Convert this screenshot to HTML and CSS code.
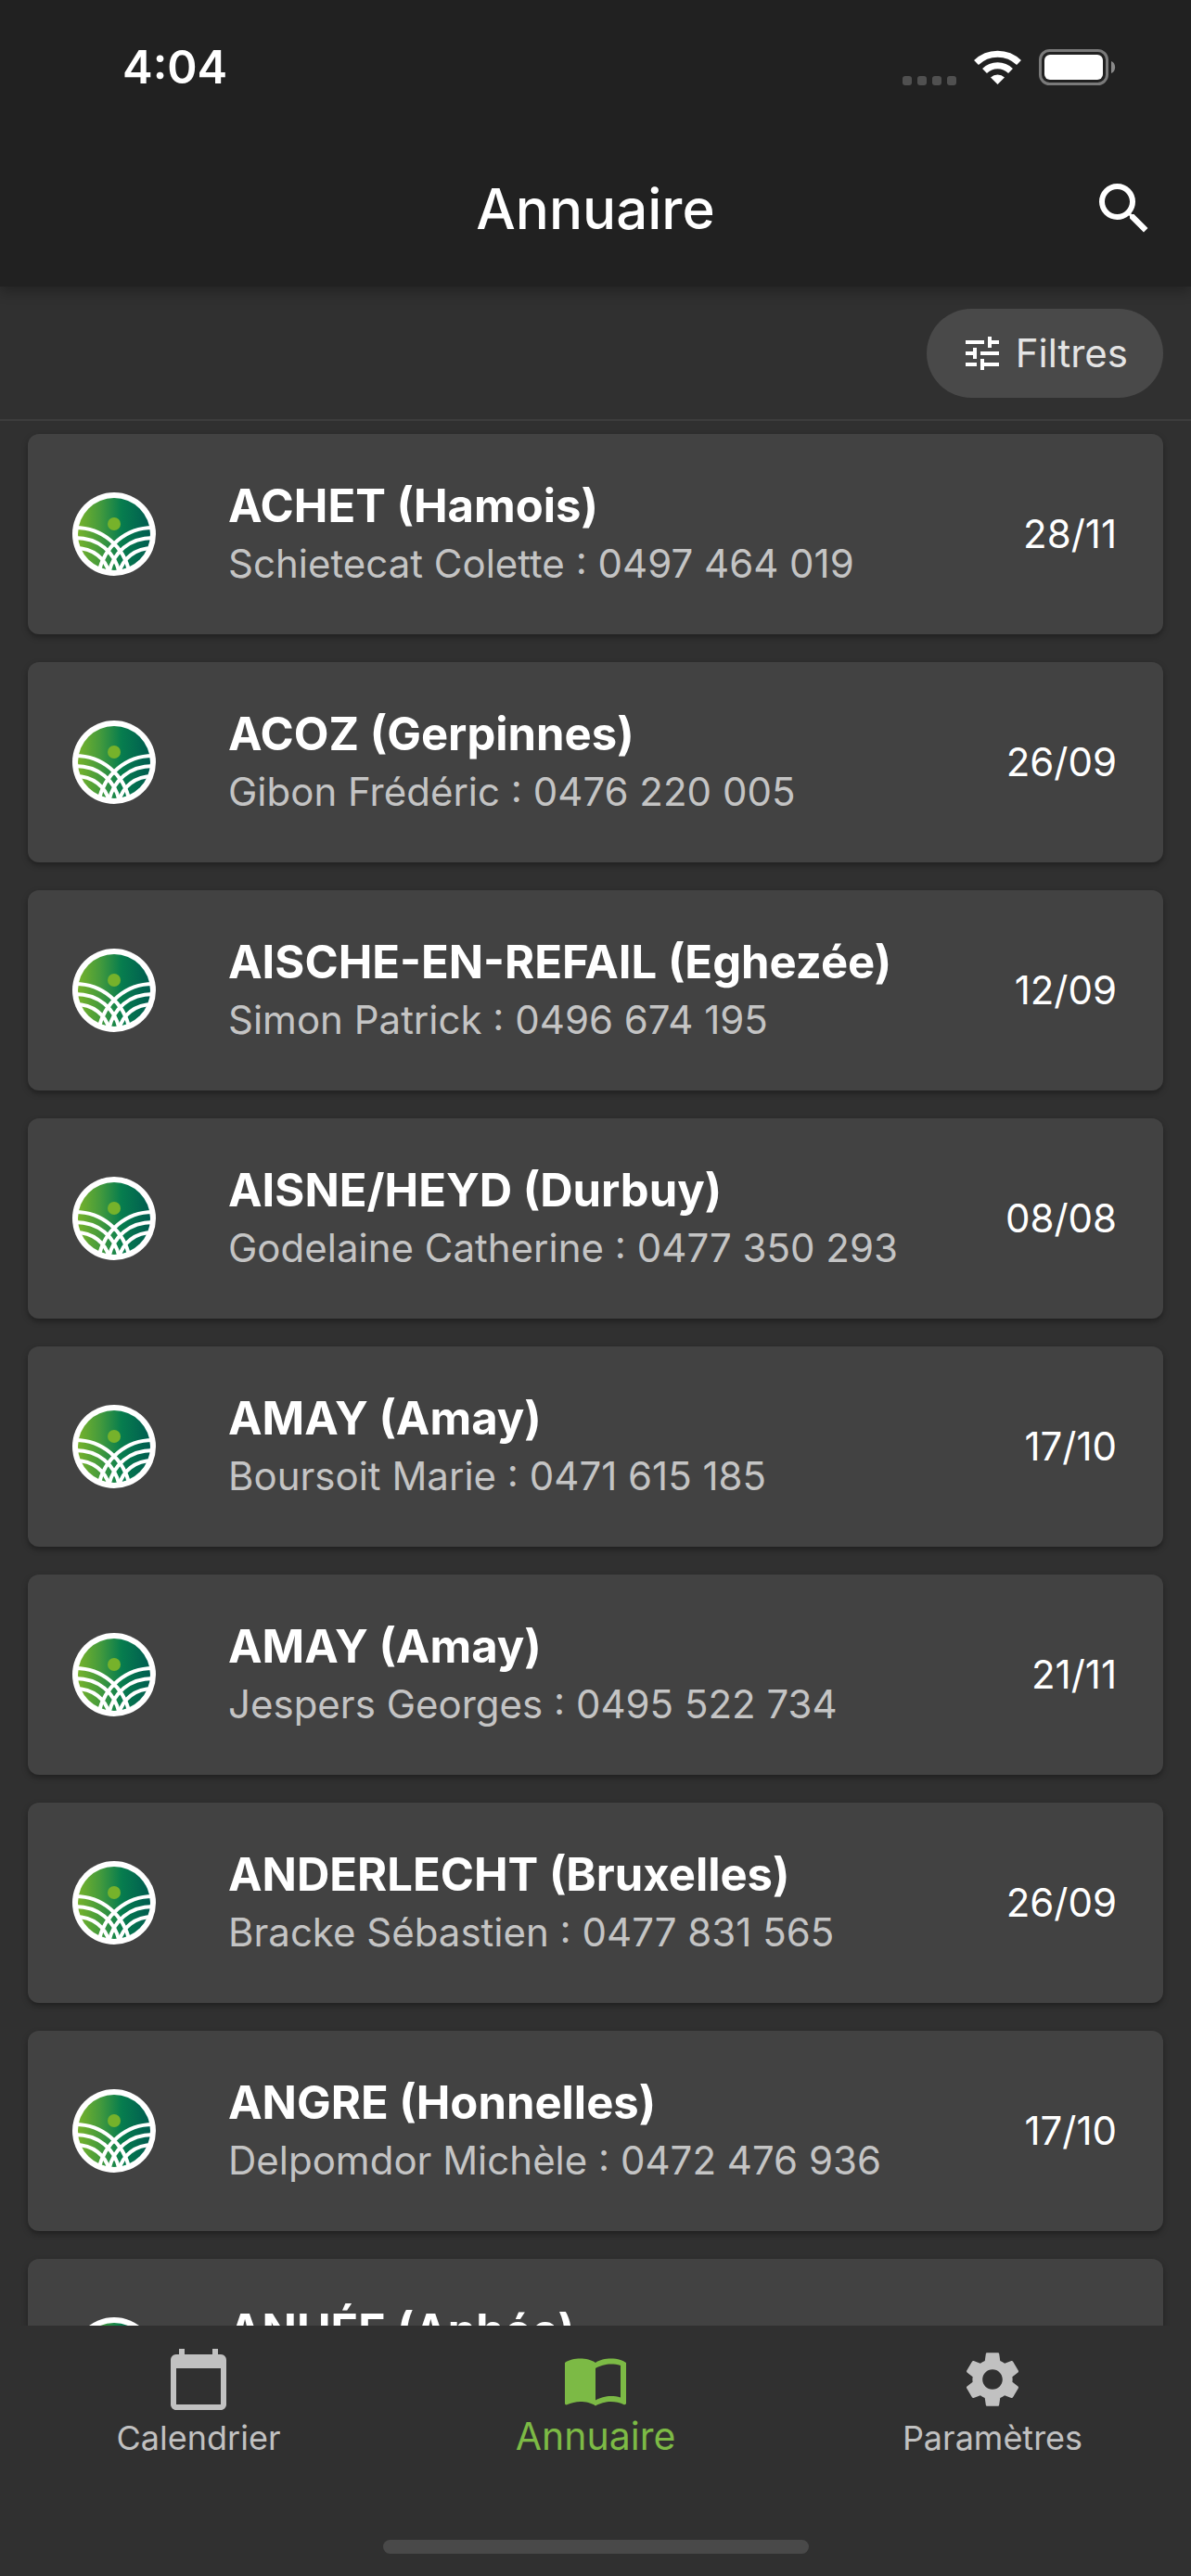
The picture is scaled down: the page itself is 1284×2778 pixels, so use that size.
FILE: index.html
```html
<!DOCTYPE html>
<html lang="fr">
<head>
<meta charset="utf-8">
<meta name="viewport" content="width=device-width, initial-scale=1">
<title>Annuaire</title>
<link rel="stylesheet" href="styles.css">
</head>
<body>
<svg class="sprite" aria-hidden="true">
  <defs>
    <linearGradient id="field" x1="0" x2="1" y1="0" y2="0">
      <stop offset="0" stop-color="#76b22b"/>
      <stop offset="0.3" stop-color="#459b3c"/>
      <stop offset="0.6" stop-color="#077d4e"/>
      <stop offset="1" stop-color="#005c50"/>
    </linearGradient>
    <clipPath id="disc"><circle cx="45" cy="45" r="42"/></clipPath>
  </defs>
  <symbol id="logo" viewBox="0 0 90 90">
    <circle cx="45" cy="45" r="45" fill="#fff"/>
    <circle cx="45" cy="45" r="39" fill="url(#field)"/>
    <circle cx="45" cy="34" r="7" fill="#76b22b"/>
    <g fill="none" stroke="#fff" stroke-width="4" clip-path="url(#disc)">
      <path d="M3 38C32 38 56 58 62 88"/>
      <path d="M3 49C28 49 46 64 51 88"/>
      <path d="M3 60C22 60 36 71 40 88"/>
      <path d="M87 38C58 38 34 58 28 88"/>
      <path d="M87 49C62 49 44 64 39 88"/>
      <path d="M87 60C68 60 54 71 50 88"/>
    </g>
  </symbol>
</svg>
<div class="app">
  <header class="header">
    <div class="status">
      <span class="time">4:04</span>
      <span class="indicators">
        <svg class="cell" viewBox="0 0 58 10" fill="#505050"><rect width="10" height="10" rx="3"/><rect x="16" width="10" height="10" rx="3"/><rect x="32" width="10" height="10" rx="3"/><rect x="48" width="10" height="10" rx="3"/></svg>
        <svg class="wifi" viewBox="0 0 51 37" fill="none" stroke="#fff"><path d="M2.500 13.500A33 33 0 0 1 48.500 13.500" stroke-width="7"/><path d="M11.500 22.500A20 20 0 0 1 39.500 22.500" stroke-width="7"/><path d="M25.500 37L18 29.500A11 11 0 0 1 33 29.500Z" fill="#fff" stroke="none"/></svg>
        <svg class="battery" viewBox="0 0 83 39"><rect x="1.500" y="1.500" width="72" height="36" rx="10" fill="none" stroke="#7a7a7a" stroke-width="3"/><rect x="6" y="6" width="63" height="27" rx="6" fill="#fff"/><path d="M78 13C83.500 15 83.500 24 78 26Z" fill="#8a8a8a"/></svg>
      </span>
    </div>
    <div class="bar">
      <h1 class="title">Annuaire</h1>
      <button class="search" type="button" aria-label="Rechercher"><svg viewBox="0 0 24 24" fill="#fff"><path d="M15.500 14h-.79l-.28-.27A6.471 6.471 0 0 0 16 9.500 6.500 6.500 0 1 0 9.500 16c1.610 0 3.090-.59 4.230-1.570l.27.28v.79l5 4.990L20.490 19l-4.990-5zm-6 0C7.010 14 5 11.990 5 9.500S7.010 5 9.500 5 14 7.010 14 9.500 11.990 14 9.500 14z"/></svg></button>
    </div>
  </header>
  <div class="filters">
    <button class="chip" type="button"><svg viewBox="3 3 18 18" fill="#fff"><path d="M3 17v2h6v-2H3zM3 5v2h10V5H3zm10 16v-2h8v-2h-8v-2h-2v6h2zM7 9v2H3v2h4v2h2V9H7zm14 4v-2H11v2h10zm-6-4h2V7h4V5h-4V3h-2v6z"/></svg>Filtres</button>
  </div>
  <main class="list">
    <article class="card"><svg class="logo"><use href="#logo"/></svg><div class="info"><h2 class="place">ACHET (Hamois)</h2><p class="contact">Schietecat Colette : 0497 464 019</p></div><time class="date">28/11</time></article>
    <article class="card"><svg class="logo"><use href="#logo"/></svg><div class="info"><h2 class="place">ACOZ (Gerpinnes)</h2><p class="contact">Gibon Frédéric : 0476 220 005</p></div><time class="date">26/09</time></article>
    <article class="card"><svg class="logo"><use href="#logo"/></svg><div class="info"><h2 class="place">AISCHE-EN-REFAIL (Eghezée)</h2><p class="contact">Simon Patrick : 0496 674 195</p></div><time class="date">12/09</time></article>
    <article class="card"><svg class="logo"><use href="#logo"/></svg><div class="info"><h2 class="place">AISNE/HEYD (Durbuy)</h2><p class="contact">Godelaine Catherine : 0477 350 293</p></div><time class="date">08/08</time></article>
    <article class="card"><svg class="logo"><use href="#logo"/></svg><div class="info"><h2 class="place">AMAY (Amay)</h2><p class="contact">Boursoit Marie : 0471 615 185</p></div><time class="date">17/10</time></article>
    <article class="card"><svg class="logo"><use href="#logo"/></svg><div class="info"><h2 class="place">AMAY (Amay)</h2><p class="contact">Jespers Georges : 0495 522 734</p></div><time class="date">21/11</time></article>
    <article class="card"><svg class="logo"><use href="#logo"/></svg><div class="info"><h2 class="place">ANDERLECHT (Bruxelles)</h2><p class="contact">Bracke Sébastien : 0477 831 565</p></div><time class="date">26/09</time></article>
    <article class="card"><svg class="logo"><use href="#logo"/></svg><div class="info"><h2 class="place">ANGRE (Honnelles)</h2><p class="contact">Delpomdor Michèle : 0472 476 936</p></div><time class="date">17/10</time></article>
    <article class="card"><svg class="logo"><use href="#logo"/></svg><div class="info"><h2 class="place">ANHÉE (Anhée)</h2></div></article>
  </main>
  <footer class="footer">
    <nav class="tabs">
      <a class="tab" href="#calendrier"><svg viewBox="0 0 24 24" fill="currentColor"><path d="M20 3h-1V1h-2v2H7V1H5v2H4c-1.100 0-2 .9-2 2v16c0 1.100.9 2 2 2h16c1.100 0 2-.9 2-2V5c0-1.100-.9-2-2-2zm0 18H4V8h16v13z"/></svg>Calendrier</a>
      <a class="tab active" href="#annuaire" aria-current="page"><svg viewBox="0 0 24 24" fill="currentColor"><path d="M21 5c-1.110-.35-2.330-.5-3.500-.5-1.950 0-4.050.4-5.500 1.500-1.450-1.100-3.550-1.500-5.500-1.500S2.450 4.900 1 6v14.650c0 .25.250.5.500.5.100 0 .15-.05.250-.05C3.100 20.450 5.050 20 6.500 20c1.950 0 4.050.4 5.500 1.500 1.350-.85 3.800-1.500 5.500-1.500 1.650 0 3.350.3 4.750 1.050.1.050.15.050.25.050.25 0 .5-.25.5-.5V6c-.6-.45-1.250-.75-2-1zm0 13.500c-1.100-.35-2.300-.5-3.500-.5-1.700 0-4.150.65-5.500 1.500V8c1.350-.85 3.800-1.500 5.500-1.500 1.200 0 2.400.15 3.500.5v11.500z"/></svg>Annuaire</a>
      <a class="tab" href="#parametres"><svg viewBox="0 0 24 24" fill="currentColor"><path d="M19.140 12.940c.04-.3.060-.61.060-.94 0-.32-.02-.64-.07-.94l2.030-1.580c.18-.14.230-.41.120-.61l-1.920-3.320c-.12-.22-.37-.29-.59-.22l-2.390.96c-.5-.38-1.030-.7-1.620-.94l-.36-2.540c-.04-.24-.24-.41-.48-.41h-3.840c-.24 0-.43.17-.47.41l-.36 2.540c-.59.24-1.130.57-1.620.94l-2.390-.96c-.22-.08-.47 0-.59.22L2.740 8.870c-.12.210-.08.470.12.610l2.030 1.580c-.05.3-.09.63-.09.94s.02.64.070.94l-2.030 1.580c-.18.140-.23.410-.12.610l1.920 3.320c.12.220.37.290.59.220l2.390-.96c.5.380 1.030.7 1.620.94l.36 2.540c.05.240.24.410.48.410h3.840c.24 0 .44-.17.470-.41l.36-2.540c.59-.24 1.130-.56 1.620-.94l2.390.96c.22.080.47 0 .59-.22l1.920-3.320c.12-.22.070-.47-.12-.61l-2.010-1.580zM12 15.600c-1.980 0-3.600-1.620-3.600-3.600s1.620-3.600 3.600-3.600 3.600 1.620 3.600 3.600-1.620 3.600-3.600 3.600z"/></svg>Paramètres</a>
    </nav>
    <div class="home"></div>
  </footer>
</div>
</body>
</html>
```
FILE: styles.css
```css
* { box-sizing: border-box; margin: 0; }
body { background: #303030; color: #fff; font-family: Inter, "Liberation Sans", sans-serif; }
button { border: 0; padding: 0; font: inherit; color: inherit; background: none; }
svg { display: block; }
.sprite { position: absolute; width: 0; height: 0; }
.app { height: 100vh; display: flex; flex-direction: column; overflow: hidden; }

.header { flex: none; background: #212121; box-shadow: 0 6px 12px rgba(0, 0, 0, .25); z-index: 1; }
.status { height: 141px; padding: 4px 81px 0 132px; display: flex; align-items: center; justify-content: space-between; }
.time { font-size: 49px; font-weight: 600; }
.indicators { display: flex; align-items: center; }
.cell { width: 58px; height: 10px; margin: 28px 19px 0 0; }
.wifi { width: 51px; height: 37px; margin-right: 19px; }
.battery { width: 83px; height: 39px; }
.bar { height: 168px; padding: 0 36px; display: grid; grid-template-columns: 72px 1fr 72px; align-items: center; }
.title { grid-column: 2; text-align: center; font-size: 60px; line-height: 72px; font-weight: 500; }
.search svg { width: 72px; height: 72px; }

.filters { flex: none; height: 145px; padding: 24px 30px 0; border-bottom: 2px solid #3d3d3d; display: flex; justify-content: flex-end; align-items: flex-start; }
.chip { height: 96px; padding: 0 38px 0 42px; border-radius: 48px; background: #494949; color: #e4e4e4; display: flex; align-items: center; gap: 18px; font-size: 42px; line-height: 48px; }
.chip svg { width: 36px; height: 36px; }

.list { flex: 1; min-height: 0; overflow: hidden; padding: 14px 30px 0; display: flex; flex-direction: column; gap: 30px; }
.card { flex: none; height: 216px; padding: 0 50px 0 48px; border-radius: 12px; background: #424242; box-shadow: 0 3px 6px rgba(0, 0, 0, .35); display: flex; align-items: center; }
.logo { flex: none; width: 90px; height: 90px; margin-right: 78px; }
.info { flex: 1; height: 124px; }
.place { font-size: 49px; line-height: 64px; font-weight: 700; }
.contact { font-size: 42px; line-height: 60px; color: #c4c4c4; }
.date { font-size: 42px; line-height: 48px; }

.footer { flex: none; height: 270px; background: #303030; display: flex; flex-direction: column; justify-content: space-between; align-items: center; padding-bottom: 24px; }
.tabs { width: 100%; display: grid; grid-template-columns: repeat(3, 1fr); padding-top: 22px; }
.tab { display: flex; flex-direction: column; align-items: center; gap: 5px; color: #c1c1c1; font-size: 36px; line-height: 44px; text-decoration: none; }
.tab svg { width: 72px; height: 72px; }
.active { color: #7cba45; font-size: 41px; line-height: 40px; }
.home { width: 459px; height: 15px; border-radius: 8px; background: #494949; }
```
